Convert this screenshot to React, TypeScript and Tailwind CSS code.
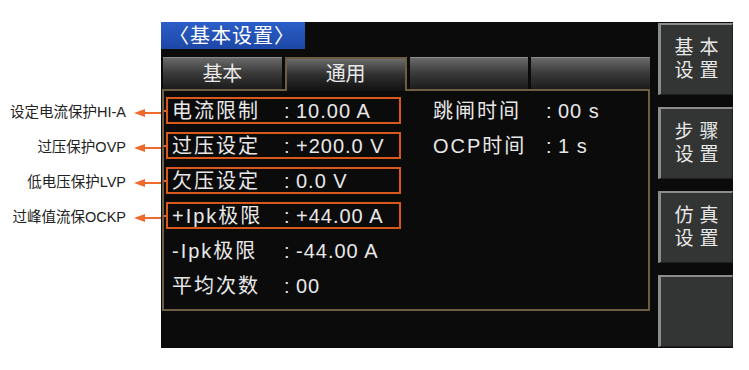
const NOTE_FONT = "font-['Liberation_Sans','Noto_Sans_CJK_SC',sans-serif]";

type Row = { label: string; value: string; note?: string };

const leftRows: Row[] = [
    { label: "电流限制", value: "10.00 A", note: "设定电流保护HI-A" },
    { label: "过压设定", value: "+200.0 V", note: "过压保护OVP" },
    { label: "欠压设定", value: "0.0 V", note: "低电压保护LVP" },
    { label: "+Ipk极限", value: "+44.00 A", note: "过峰值流保OCKP" },
    { label: "-Ipk极限", value: "-44.00 A" },
    { label: "平均次数", value: "00" },
];

const rightRows: Row[] = [
    { label: "跳闸时间", value: "00 s" },
    { label: "OCP时间", value: "1 s" },
];

const sideButtons = [
    ["基本", "设置"],
    ["步骤", "设置"],
    ["仿真", "设置"],
    [],
];

function Arrow() {
    return (
        <svg width="27" height="10" viewBox="0 0 27 10" className="shrink-0">
            <line x1="9" y1="5" x2="27" y2="5" stroke="#ee6a2c" strokeWidth="2" />
            <polygon points="0,5 11,1 11,9" fill="#ee6a2c" />
        </svg>
    );
}

function Notes() {
    return (
        <div className={`w-[161px] shrink-0 pt-[95px] ${NOTE_FONT}`}>
            {leftRows
                .filter((r) => r.note)
                .map((r) => (
                    <div key={r.label} className="flex h-[35px] items-center">
                        <span className="flex-1 pr-[8px] text-right text-[14.5px] leading-none text-[#222222]">
                            {r.note}
                        </span>
                        <Arrow />
                    </div>
                ))}
        </div>
    );
}

function SettingRow({ row, boxed, labelWidth }: { row: Row; boxed: boolean; labelWidth: string }) {
    return (
        <div className="flex h-[35px] items-center">
            <div className={`h-[2px] w-[2px] ${boxed ? "bg-[#ee6a2c]" : ""}`} />
            <div
                className={`flex h-[27px] w-[235px] items-center border-2 pl-[4px] ${
                    boxed ? "border-[#d9591c]" : "border-transparent"
                }`}
            >
                <span className={`${labelWidth} shrink-0 tracking-[2px]`}>{row.label}</span>
                <span className="w-[13px] shrink-0 pl-[1px]">:</span>
                <span className="tracking-[1px]">{row.value}</span>
            </div>
        </div>
    );
}

function Tab({ label, active }: { label?: string; active?: boolean }) {
    if (active) {
        return (
            <div className="relative z-10 -mb-[2px] flex w-[122px] items-center justify-center border-2 border-b-0 border-[#6e5d40] bg-gradient-to-b from-[#6c6c6c] via-[#2f2f2f] to-[#111111] pb-[2px]">
                {label}
            </div>
        );
    }
    return (
        <div className="flex w-[119px] items-center justify-center border-t border-[#8a8a8a] bg-gradient-to-b from-[#6a6a6a] via-[#3a3a3a] to-[#1c1c1c]">
            {label}
        </div>
    );
}

function SideButton({ lines }: { lines: string[] }) {
    return (
        <div className="flex h-[72px] flex-col items-center justify-center gap-[1px] border-t-2 border-l-[3px] border-r border-b border-t-[#8c8c8c] border-l-[#8c8c8c] border-r-[#1f1f1f] border-b-[#1f1f1f] bg-[#333534] text-[19px] leading-[22px]">
            {lines.map((line) => (
                <div key={line} className="flex gap-[6px]">
                    {Array.from(line).map((ch, i) => (
                        <span key={i}>{ch}</span>
                    ))}
                </div>
            ))}
        </div>
    );
}

export default function App() {
    return (
        <div className="flex h-[370px] w-[749px] bg-white">
            <Notes />
            <div
                className={`mt-[22px] flex h-[326px] w-[572px] shrink-0 bg-[#0b0b0b] text-[#e8e8e8] ${NOTE_FONT}`}
            >
                <div className="flex w-[489px] shrink-0 flex-col">
                    <div className="flex h-[27px]">
                        <div className="flex w-[144px] items-center bg-gradient-to-b from-[#2c5ec8] to-[#1c47a6] pl-[8px] text-[20px] leading-none tracking-[1px] text-white">
                            〈基本设置〉
                        </div>
                    </div>
                    <div className="mt-[8px] flex h-[32px] gap-[3px] pl-[2px] text-[20px] leading-none">
                        <Tab label="基本" />
                        <Tab label="通用" active />
                        <Tab />
                        <Tab />
                    </div>
                    <div className="ml-[1px] flex h-[222px] w-[488px] gap-[24px] border-2 border-[#6e5d40] pt-[2px] text-[20px] leading-none">
                        <div className="flex flex-col">
                            {leftRows.map((r, i) => (
                                <SettingRow key={r.label} row={r} boxed={i < 4} labelWidth="w-[111px]" />
                            ))}
                        </div>
                        <div className="flex flex-col">
                            {rightRows.map((r) => (
                                <SettingRow key={r.label} row={r} boxed={false} labelWidth="w-[112px]" />
                            ))}
                        </div>
                    </div>
                </div>
                <div className="ml-[8px] flex w-[75px] shrink-0 flex-col gap-[12px] pt-[1px]">
                    {sideButtons.map((lines, i) => (
                        <SideButton key={i} lines={lines} />
                    ))}
                </div>
            </div>
        </div>
    );
}
